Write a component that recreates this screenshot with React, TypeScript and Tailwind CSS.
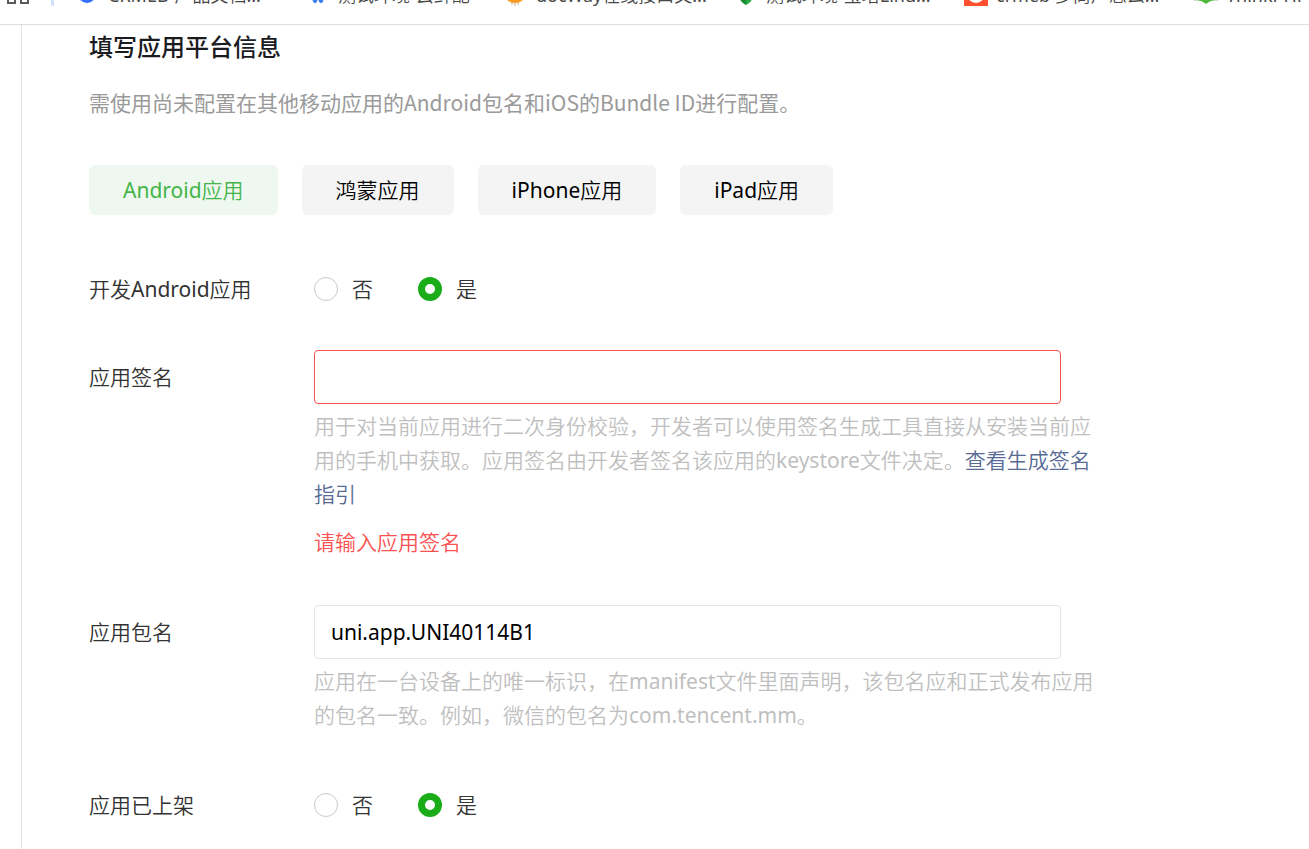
import React, { useState } from 'react';

type Bookmark = {
  title: string;
  icon: React.ReactNode;
  short?: boolean;
};

const bookmarks: Bookmark[] = [
  {
    title: 'CRMEB-产品文档...',
    icon: <circle cx="11" cy="12" r="9" fill="#3370ff" />,
  },
  {
    title: '测试环境-云鲜配',
    short: true,
    icon: (
      <path
        d="M5 8l4 11 3-7 3 7 4-11"
        fill="none"
        stroke="#3b7cf5"
        strokeWidth="4"
        strokeLinejoin="round"
      />
    ),
  },
  {
    title: 'docWay在线接口文...',
    icon: (
      <>
        <ellipse cx="11" cy="13" rx="10" ry="8" fill="#fb9a1c" />
        <path d="M8 20v3M11 20v4M14 20v3" stroke="#c9aa80" strokeWidth="1" />
      </>
    ),
  },
  {
    title: '测试环境-宝塔Linu...',
    icon: (
      <>
        <path d="M4 4l8-3v22C6 20 4 16 4 4z" fill="#1b8a35" />
        <path d="M12 1l8 3c0 12-2 16-8 19z" fill="#27ab46" />
      </>
    ),
  },
  {
    title: 'crmeb 多商户怎么...',
    icon: (
      <>
        <rect width="24" height="24" fill="#ff5030" />
        <circle cx="12" cy="12" r="7" fill="none" stroke="#fff" strokeWidth="4" />
      </>
    ),
  },
  {
    title: 'ThinkPHP',
    icon: (
      <path
        d="M0 17q7-1 12 3q5-4 12-3"
        fill="none"
        stroke="#4dba3c"
        strokeWidth="3"
      />
    ),
  },
];

const platforms = ['Android应用', '鸿蒙应用', 'iPhone应用', 'iPad应用'];

const BookmarkBar: React.FC = () => (
  <nav className="flex h-[25px] items-end overflow-hidden border-b border-[#dedede] pb-4 text-lg leading-[26px] text-[#474747]">
    <svg
      className="mb-0.5 ml-1.5 h-6 w-6 shrink-0"
      viewBox="0 0 24 24"
      fill="none"
      stroke="#5a5a5a"
      strokeWidth="2"
    >
      <path d="M2 2h7v7H2zM15 2h7v7h-7zM2 14h7v7H2zM15 14h7v7h-7z" />
    </svg>
    <span className="mr-[22px] mb-0.5 ml-[21px] h-6 w-[3px] shrink-0 rounded-full bg-[#d0e0fc]" />
    {bookmarks.map((item) => (
      <a
        key={item.title}
        href="#"
        className={`flex shrink-0 items-start gap-2 whitespace-nowrap ${
          item.short ? 'w-[198px]' : 'w-[230px]'
        }`}
      >
        <svg className="h-6 w-6 shrink-0" viewBox="0 0 24 24">
          {item.icon}
        </svg>
        {item.title}
      </a>
    ))}
  </nav>
);

type YesNoProps = {
  label: string;
  name: string;
};

const YesNo: React.FC<YesNoProps> = ({ label, name }) => {
  const [value, setValue] = useState('是');

  return (
    <fieldset className="flex items-center">
      <legend className="float-left w-[225px] shrink-0 text-[#333]">
        {label}
      </legend>
      <div className="flex gap-[45px]">
        {['否', '是'].map((option) => (
          <label key={option} className="flex items-center gap-3.5">
            <input
              type="radio"
              name={name}
              checked={value === option}
              onChange={() => setValue(option)}
              className="h-6 w-6 appearance-none rounded-full border border-[#c8c9d0] bg-white checked:border-[7px] checked:border-[#1aad19]"
            />
            {option}
          </label>
        ))}
      </div>
    </fieldset>
  );
};

const App: React.FC = () => {
  const [platform, setPlatform] = useState(platforms[0]);
  const [signature, setSignature] = useState('');
  const [packageName, setPackageName] = useState('uni.app.UNI40114B1');

  return (
    <div className="flex min-h-screen flex-col bg-white font-['Noto_Sans','Noto_Sans_CJK_SC_DemiLight','Noto_Sans_CJK_SC_Light','Noto_Sans_CJK_SC',sans-serif]">
      <BookmarkBar />

      <main className="ml-[21px] flex-1 border-l border-[#e4e4e4] pt-[3px] pr-6 pb-5 pl-[67px] text-[21px] leading-[34px] text-[#353535]">
        <h1 className="font-['Noto_Sans_CJK_SC',sans-serif] text-2xl leading-9 font-medium text-[#1a1b1f]">
          填写应用平台信息
        </h1>
        <p className="mt-[21px] font-['Noto_Sans_CJK_SC',sans-serif] text-[#9a9a9a]">
          需使用尚未配置在其他移动应用的Android包名和iOS的Bundle ID进行配置。
        </p>

        {/* Platform tabs */}
        <div className="mt-[46px] flex flex-wrap gap-6 text-black">
          {platforms.map((item) => (
            <button
              key={item}
              type="button"
              onClick={() => setPlatform(item)}
              className={`h-[50px] rounded-md px-[34px] ${
                item === platform
                  ? 'bg-[#eef8f0] text-[#44b549]'
                  : 'bg-[#f4f4f4]'
              }`}
            >
              {item}
            </button>
          ))}
        </div>

        <form className="mt-[57px]">
          <YesNo label="开发Android应用" name="develop" />

          {/* Signature */}
          <div className="mt-11 flex">
            <label
              htmlFor="signature"
              className="w-[225px] shrink-0 pt-2.5 text-[#333]"
            >
              应用签名
            </label>
            <div className="max-w-[780px] flex-1">
              <input
                id="signature"
                value={signature}
                onChange={(e) => setSignature(e.target.value)}
                className="block h-[54px] w-full max-w-[747px] rounded border border-[#fa5151] px-4 text-black outline-none"
              />
              <p className="mt-[5px] text-[#bfbfbf]">
                用于对当前应用进行二次身份校验，开发者可以使用签名生成工具直接从安装当前应用的手机中获取。应用签名由开发者签名该应用的keystore文件决定。
                <a href="#" className="text-[#576b95]">
                  查看生成签名指引
                </a>
              </p>
              <p className="mt-3.5 text-[#fa5151]">请输入应用签名</p>
            </div>
          </div>

          {/* Package name */}
          <div className="mt-[46px] flex">
            <label
              htmlFor="package-name"
              className="w-[225px] shrink-0 pt-2.5 text-[#333]"
            >
              应用包名
            </label>
            <div className="max-w-[780px] flex-1">
              <input
                id="package-name"
                value={packageName}
                onChange={(e) => setPackageName(e.target.value)}
                className="block h-[54px] w-full max-w-[747px] rounded border border-[#e4e5e9] px-4 text-black outline-none"
              />
              <p className="mt-[5px] text-[#bfbfbf]">
                应用在一台设备上的唯一标识，在manifest文件里面声明，该包名应和正式发布应用的包名一致。例如，微信的包名为com.tencent.mm。
              </p>
            </div>
          </div>

          <div className="mt-14">
            <YesNo label="应用已上架" name="published" />
          </div>
        </form>
      </main>
    </div>
  );
};

export default App;
